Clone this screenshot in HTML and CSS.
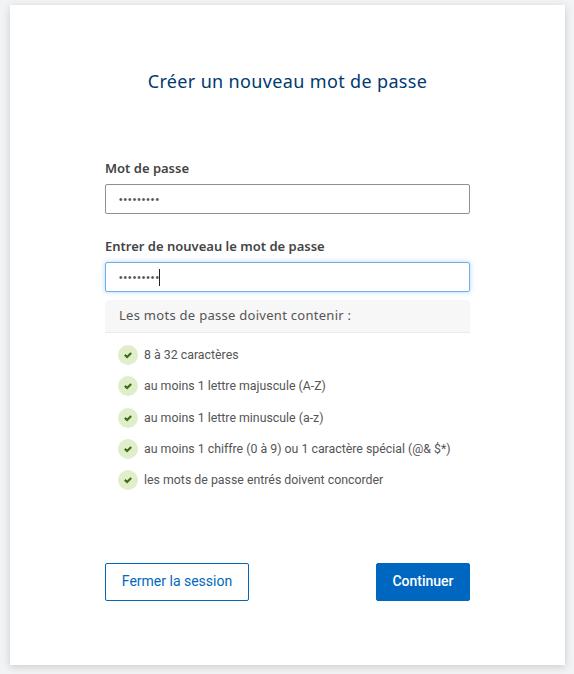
FILE: index.html
```html
<!DOCTYPE html>
<html lang="fr">
<head>
<meta charset="utf-8">
<title>Créer un nouveau mot de passe</title>
<link rel="stylesheet" href="styles.css">
</head>
<body>
<main class="card">
  <h1 class="title">Créer un nouveau mot de passe</h1>
  <form class="form">
    <div class="field">
      <label class="label">Mot de passe</label>
      <div class="input"><span class="dots">•••••••••</span></div>
    </div>
    <div class="field field-second">
      <label class="label">Entrer de nouveau le mot de passe</label>
      <div class="input input-focus"><span class="dots">•••••••••</span><span class="caret"></span></div>
    </div>
    <div class="rules">
      <div class="rules-head">Les mots de passe doivent contenir :</div>
      <ul class="rules-list">
        <li class="rule"><svg class="check" viewBox="0 0 20 20"><circle cx="10" cy="10" r="10" fill="#e2edc9"/><path d="M6.8 9.9l2.3 2.1 4.1-4" fill="none" stroke="#37701a" stroke-width="2.2"/></svg>8 à 32 caractères</li>
        <li class="rule"><svg class="check" viewBox="0 0 20 20"><circle cx="10" cy="10" r="10" fill="#e2edc9"/><path d="M6.8 9.9l2.3 2.1 4.1-4" fill="none" stroke="#37701a" stroke-width="2.2"/></svg>au moins 1 lettre majuscule (A-Z)</li>
        <li class="rule"><svg class="check" viewBox="0 0 20 20"><circle cx="10" cy="10" r="10" fill="#e2edc9"/><path d="M6.8 9.9l2.3 2.1 4.1-4" fill="none" stroke="#37701a" stroke-width="2.2"/></svg>au moins 1 lettre minuscule (a-z)</li>
        <li class="rule"><svg class="check" viewBox="0 0 20 20"><circle cx="10" cy="10" r="10" fill="#e2edc9"/><path d="M6.8 9.9l2.3 2.1 4.1-4" fill="none" stroke="#37701a" stroke-width="2.2"/></svg>au moins 1 chiffre (0 à 9) ou 1 caractère spécial (@&amp; $*)</li>
        <li class="rule"><svg class="check" viewBox="0 0 20 20"><circle cx="10" cy="10" r="10" fill="#e2edc9"/><path d="M6.8 9.9l2.3 2.1 4.1-4" fill="none" stroke="#37701a" stroke-width="2.2"/></svg>les mots de passe entrés doivent concorder</li>
      </ul>
    </div>
    <div class="actions">
      <button type="button" class="btn btn-outline">Fermer la session</button>
      <button type="button" class="btn btn-primary">Continuer</button>
    </div>
  </form>
</main>
</body>
</html>
```
FILE: styles.css
```css
* { box-sizing: border-box; }
html, body { height: 100%; }
body {
  margin: 0;
  padding: 5px 9px 9px 10px;
  background: #f2f3f5;
  overflow: hidden;
}
.card {
  width: 555px;
  height: 660px;
  background: #fff;
  box-shadow: 0 2px 8px rgba(0, 0, 0, 0.16);
  padding: 0 95px;
}
.title {
  margin: 0;
  padding-top: 62px;
  height: 154px;
  font: 400 18px/28px "Noto Sans", sans-serif;
  letter-spacing: 0.35px;
  color: #003a70;
  text-align: center;
}
.form { display: flex; flex-direction: column; }
.field { display: flex; flex-direction: column; }
.field-second { margin-top: 23px; }
.label {
  height: 25px;
  font: 600 13px/18px "Noto Sans", sans-serif;
  color: #444;
}
.input {
  display: flex;
  align-items: center;
  height: 30px;
  padding: 0 13px;
  background: #fff;
  border: 1px solid #8f8f8f;
  border-radius: 2px;
}
.input-focus {
  border-color: #6db0ec;
  box-shadow: 0 0 5px rgba(70, 160, 240, 0.45);
}
.dots {
  padding-top: 1px;
  font: 400 10px/14px "Liberation Sans", sans-serif;
  letter-spacing: 1.05px;
  color: #555;
}
.caret {
  width: 1px;
  height: 17px;
  margin-left: -1px;
  background: #222;
}
.rules { margin-top: 8px; }
.rules-head {
  height: 33px;
  padding-left: 14px;
  background: #f7f7f7;
  border-bottom: 1px solid #ebebeb;
  border-radius: 4px 4px 0 0;
  font: 400 13px/31px "Noto Sans", sans-serif;
  letter-spacing: 0.28px;
  color: #555;
}
.rules-list {
  list-style: none;
  margin: 0;
  padding: 6.6px 0 0 13px;
  height: 230px;
}
.rule {
  display: flex;
  align-items: center;
  height: 31.2px;
  font: 400 12.35px/16px Roboto, sans-serif;
  color: #555;
}
.check {
  flex: none;
  width: 20px;
  height: 20px;
  margin-right: 6px;
}
.actions { display: flex; justify-content: space-between; }
.btn {
  height: 38px;
  padding: 0 0 2px;
  border-radius: 2px;
  font: 400 14px/20px Roboto, sans-serif;
  cursor: pointer;
}
.btn-outline {
  width: 144px;
  background: #fff;
  border: 1px solid #0067c0;
  color: #0067c0;
}
.btn-primary {
  width: 94px;
  background: #0067c0;
  border: 1px solid #0067c0;
  color: #fff;
  font-weight: 500;
}
```
